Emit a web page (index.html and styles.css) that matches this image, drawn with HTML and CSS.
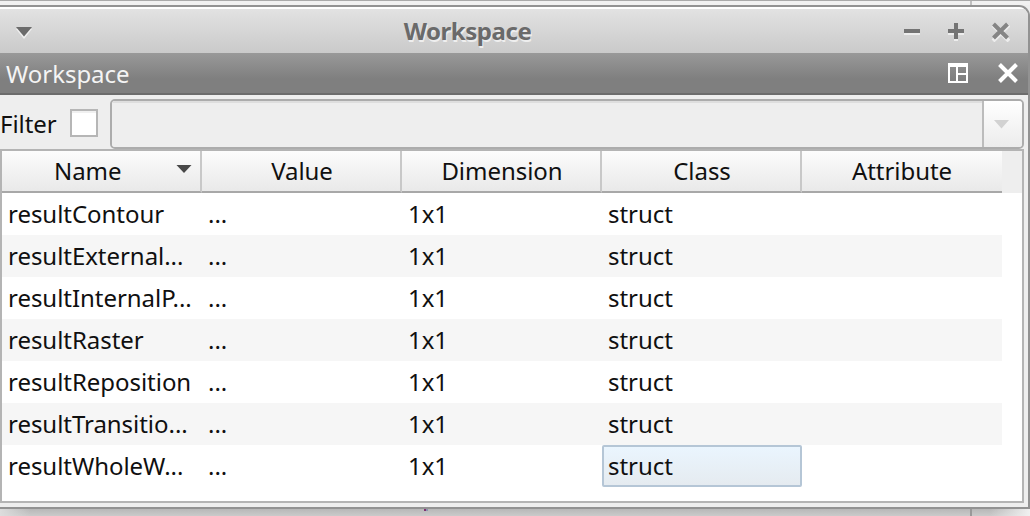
FILE: index.html
```html
<!DOCTYPE html>
<html lang="en">
<head>
<meta charset="utf-8">
<title>Workspace</title>
<link rel="stylesheet" href="styles.css">
</head>
<body>
<div class="desktop">
  <div class="backdrop"></div>
  <main class="window">
    <header class="titlebar">
      <svg class="menu-arrow" width="16" height="12" viewBox="0 0 16 12"><path d="M0 2H16L8 12Z" fill="#f0f0f0"/><path d="M0 0H16L8 9.500Z" fill="#6c6c6c"/></svg>
      <h1 class="title">Workspace</h1>
      <svg class="controls" width="106" height="20" viewBox="0 0 106 20">
        <path d="M0 11H16M44 11H60M52 4V19M89 3L105 19M105 3L89 19" stroke="#ededed" stroke-width="4" fill="none"/>
        <path d="M0 9H16M44 9H60M52 1V17" stroke="#747474" stroke-width="4" fill="none"/>
        <path d="M89.500 2L103.500 16M103.500 2L89.500 16" stroke="#858585" stroke-width="4" fill="none"/>
      </svg>
    </header>
    <div class="dock-title">
      <span class="dock-label">Workspace</span>
      <svg class="dock-icons" width="70" height="20" viewBox="0 0 70 20">
        <path d="M0 0H20V20H0ZM2 4V18H8V4ZM10 4V10H18V4ZM10 12V18H18V12Z" fill="#fff" fill-rule="evenodd"/>
        <path d="M51.500 1.500L68.500 18.500M68.500 1.500L51.500 18.500" stroke="#fff" stroke-width="4" fill="none"/>
      </svg>
    </div>
    <div class="filter">
      <label class="filter-label">Filter</label>
      <span class="checkbox"></span>
      <div class="combo">
        <div class="combo-field"></div>
        <div class="combo-button"><svg width="15" height="9" viewBox="0 0 15 9"><path d="M0 0H15L7.500 8.500Z" fill="#d2d2d2"/></svg></div>
      </div>
    </div>
    <section class="table">
      <div class="head">
        <div class="th name"><span>Name</span><svg class="sort" width="16" height="9" viewBox="0 0 16 9"><path d="M0.500 0H15.500L8 8Z" fill="#484848"/></svg></div>
        <div class="th"><span>Value</span></div>
        <div class="th"><span>Dimension</span></div>
        <div class="th"><span>Class</span></div>
        <div class="th"><span>Attribute</span></div>
      </div>
      <div class="row"><span>resultContour</span><span>...</span><span>1x1</span><span>struct</span><span></span></div>
      <div class="row"><span>resultExternal...</span><span>...</span><span>1x1</span><span>struct</span><span></span></div>
      <div class="row"><span>resultInternalP...</span><span>...</span><span>1x1</span><span>struct</span><span></span></div>
      <div class="row"><span>resultRaster</span><span>...</span><span>1x1</span><span>struct</span><span></span></div>
      <div class="row"><span>resultReposition</span><span>...</span><span>1x1</span><span>struct</span><span></span></div>
      <div class="row"><span>resultTransitio...</span><span>...</span><span>1x1</span><span>struct</span><span></span></div>
      <div class="row"><span>resultWholeW...</span><span>...</span><span>1x1</span><span class="current">struct</span><span></span></div>
    </section>
  </main>
  <div class="shadow"><i class="speck"></i><i class="split"></i></div>
</div>
</body>
</html>
```
FILE: styles.css
```css
* { box-sizing: border-box; }
body { margin: 0; overflow: hidden; font-family: "Noto Sans", sans-serif; font-size: 24px; letter-spacing: -0.04px; color: #101010; }
.desktop { width: 1030px; height: 516px; display: flex; flex-direction: column; background: #eee; }
.backdrop { height: 5px; border-top: 1px solid #aaa; background: linear-gradient(90deg, transparent 970px, #c0c0c0 970px, #c0c0c0 972px, transparent 972px), #f1f1f1; }
.window { height: 504px; border: solid #929292; border-width: 2px 2px 2px 0; border-top-right-radius: 11px; background: #eee; overflow: hidden; }
.titlebar { height: 46px; border-top: 2px solid #fff; background: linear-gradient(#e2e2e2, #cacaca); display: grid; grid-template-columns: 124px 1fr 124px; align-items: center; }
.menu-arrow { margin: 3px 0 0 16px; }
.title { margin: 0 0 1px; padding-right: 93px; text-align: center; font-size: 24px; line-height: 40px; font-weight: 700; letter-spacing: -0.45px; color: #6a6a6a; text-shadow: 1px 2px 0 #eee; }
.controls { margin-top: 2px; }
.dock-title { height: 42px; border-bottom: 2px solid #6c6c6c; background: linear-gradient(#999, #7f7f7f 65%); display: flex; justify-content: space-between; align-items: center; padding: 0 10px 0 6px; color: #f4f4f4; }
.dock-label { line-height: 40px; padding-top: 1px; }
.filter { height: 54px; padding-top: 4px; display: flex; }
.filter-label { width: 70px; line-height: 50px; }
.checkbox { width: 28px; height: 28px; margin: 10px 12px 0 0; border: 2px solid #b6b6b6; background: #fff; box-shadow: inset 0 2px #f0f0f0; }
.combo { width: 914px; height: 50px; display: flex; border: 2px solid #acacac; border-radius: 5px; overflow: hidden; }
.combo-field { flex: 1; background: #eee; box-shadow: inset 0 2px #dedede; }
.combo-button { width: 40px; padding-right: 4px; border-left: 2px solid #bcbcbc; background: linear-gradient(#fff, #ececec); display: flex; align-items: center; justify-content: center; }
.table { height: 354px; width: 1024px; border: 2px solid #b4b4b4; background: #fff; }
.head { height: 42px; padding-right: 20px; background: #eee; display: grid; grid-template-columns: 200px 200px 200px 200px 200px; }
.th { padding-left: 2px; border-right: 2px solid #c8c8c8; border-bottom: 2px solid #a8a8a8; background: linear-gradient(#fcfcfc, #e9e9e9); text-align: center; line-height: 40px; }
.th:last-child { padding-left: 0; border-right: 0; }
.name { display: flex; justify-content: space-between; padding: 0 8px 0 52px; }
.sort { margin-top: 14px; }
.row { width: 1000px; height: 42px; display: grid; grid-template-columns: 200px 200px 200px 200px 200px; line-height: 42px; }
.row:nth-child(odd) { background: #f6f6f6; }
.row span { padding-left: 6px; white-space: nowrap; }
.row .current { border: 2px solid #b5c6d6; border-radius: 2px; background: linear-gradient(#eaf5fe, #e5ebf0); padding-left: 4px; line-height: 38px; }
.shadow { flex: 1; background: linear-gradient(90deg, #ddd, transparent 30px, transparent 990px, #f0f0f0 1030px), linear-gradient(#b8b8b8, #cacaca); display: flex; }
.speck { width: 2px; height: 2px; margin-left: 424px; background: #803070; box-shadow: 2px 0 #8c94b0; }
.split { width: 2px; margin-left: 544px; background: #999; }
```
